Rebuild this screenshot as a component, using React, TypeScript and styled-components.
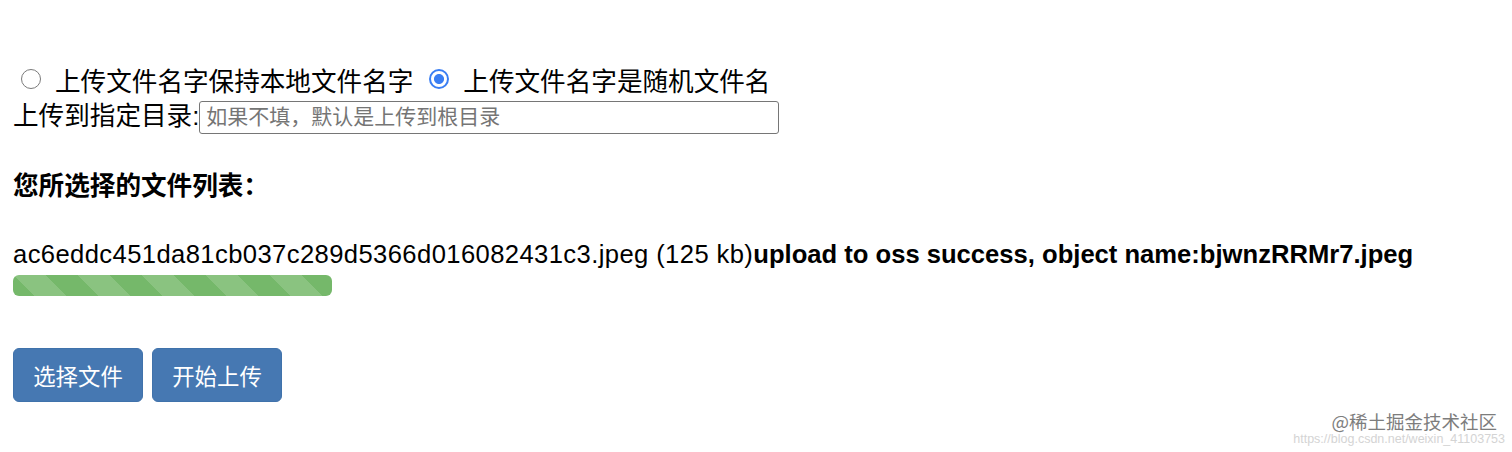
import React from 'react';
import styled, { createGlobalStyle } from 'styled-components';

const GlobalStyle = createGlobalStyle`
  html, body {
    margin: 0;
    padding: 0;
    background: #ffffff;
  }
  body {
    font-family: "Liberation Sans", "Noto Sans CJK SC", sans-serif;
    font-size: 25.6px;
    color: #000000;
  }
`;

const Page = styled.div`
  position: relative;
  width: 1512px;
  height: 452px;
  box-sizing: border-box;
  padding: 61px 13px 0;
  overflow: hidden;
`;

const Line = styled.div`
  display: flex;
  align-items: center;
  height: 36px;
  white-space: nowrap;
`;

const RadioLabel = styled.label<{ $first?: boolean }>`
  display: flex;
  align-items: center;
  margin-left: ${(p) => (p.$first ? '8px' : '16px')};
`;

const Radio = styled.input.attrs({ type: 'radio' })`
  appearance: none;
  box-sizing: border-box;
  width: 20px;
  height: 20px;
  margin: 0 14px 0 0;
  border-radius: 50%;
  border: 1.5px solid #7a7a7a;
  background: #ffffff;

  &:checked {
    border: 2.5px solid #3a7ef3;
    background: radial-gradient(circle, #3a7ef3 0 4.6px, #ffffff 5.4px);
  }
`;

const DirLabel = styled.span`
  margin-top: -3px;
`;

const DirInput = styled.input`
  box-sizing: border-box;
  width: 580px;
  height: 33px;
  margin-top: 4px;
  padding: 0 6px;
  border: 1.5px solid #767676;
  border-radius: 3px;
  font-family: "Liberation Sans", "Noto Sans CJK SC", sans-serif;
  font-size: 21px;
  outline: none;

  &::placeholder {
    color: #757575;
  }
`;

const ListTitle = styled.h4`
  margin: 35px 0 0;
  height: 36px;
  line-height: 36px;
  font-size: 25.6px;
  font-weight: bold;
`;

const FileRow = styled.div`
  margin-top: 32px;
  height: 36px;
  line-height: 36px;
  white-space: nowrap;
`;

const FileName = styled.span`
  letter-spacing: 0.4px;
`;

const Status = styled.b`
  font-weight: bold;
`;

const Progress = styled.div`
  margin-top: 3px;
  width: 319px;
  height: 21px;
  border-radius: 6px;
  background-color: #75b86a;
  background-image: linear-gradient(
    45deg,
    rgba(255, 255, 255, 0.15) 25%,
    transparent 25%,
    transparent 50%,
    rgba(255, 255, 255, 0.15) 50%,
    rgba(255, 255, 255, 0.15) 75%,
    transparent 75%,
    transparent
  );
  background-size: 64px 64px;
`;

const Actions = styled.div`
  display: flex;
  gap: 9px;
  margin-top: 52px;
`;

const Button = styled.button`
  box-sizing: border-box;
  width: 130px;
  height: 54px;
  padding: 0;
  border: 1.5px solid #4072ab;
  border-radius: 6px;
  background: #4678b2;
  color: #ffffff;
  font-family: "Liberation Sans", "Noto Sans CJK SC", sans-serif;
  font-size: 22.4px;
`;

const Watermark = styled.div`
  position: absolute;
  right: 7px;
  bottom: 6px;
  display: flex;
  flex-direction: column;
  align-items: flex-end;
`;

const Brand = styled.span`
  font-family: "Noto Sans CJK SC", sans-serif;
  font-size: 18.5px;
  line-height: 22px;
  color: #7d7d7d;
  margin-right: 8px;
`;

const SourceUrl = styled.span`
  font-family: "Liberation Sans", sans-serif;
  font-size: 12.5px;
  line-height: 14px;
  color: #d4d4d4;
`;

export default function App() {
  return (
    <>
      <GlobalStyle />
      <Page>
        <Line>
          <RadioLabel $first>
            <Radio name="nameMode" />
            上传文件名字保持本地文件名字
          </RadioLabel>
          <RadioLabel>
            <Radio name="nameMode" defaultChecked />
            上传文件名字是随机文件名
          </RadioLabel>
        </Line>
        <Line>
          <DirLabel>上传到指定目录:</DirLabel>
          <DirInput placeholder="如果不填，默认是上传到根目录" />
        </Line>
        <ListTitle>您所选择的文件列表：</ListTitle>
        <FileRow>
          <FileName>ac6eddc451da81cb037c289d5366d016082431c3.jpeg (125 kb)</FileName>
          <Status>upload to oss success, object name:bjwnzRRMr7.jpeg</Status>
        </FileRow>
        <Progress />
        <Actions>
          <Button>选择文件</Button>
          <Button>开始上传</Button>
        </Actions>
        <Watermark>
          <Brand>@稀土掘金技术社区</Brand>
          <SourceUrl>https://blog.csdn.net/weixin_41103753</SourceUrl>
        </Watermark>
      </Page>
    </>
  );
}
